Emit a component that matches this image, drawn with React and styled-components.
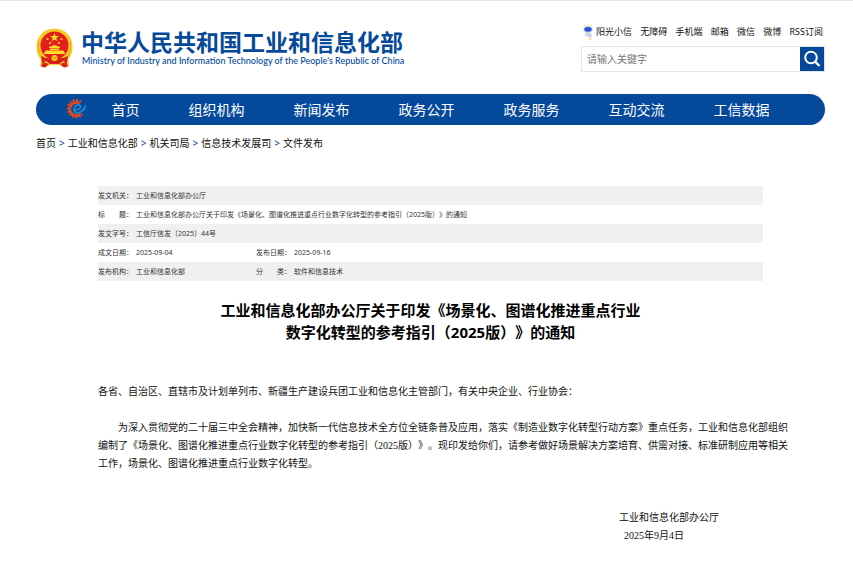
import React from 'react';
import styled, { createGlobalStyle, ThemeProvider } from 'styled-components';

const theme = {
  blue: '#05499a',
  stripe: '#f0f0f0',
  sans: '"Noto Sans", "Noto Sans CJK SC", sans-serif',
  song: '"Liberation Serif", "Noto Sans CJK SC", serif',
};

const GlobalStyle = createGlobalStyle`
  * {
    box-sizing: border-box;
  }
  body {
    margin: 0;
    color: #111;
    background: #fff;
    font-family: ${p => p.theme.sans};
    text-spacing-trim: space-all;
  }
  a {
    color: inherit;
    text-decoration: none;
  }
`;

const Page = styled.div`
  border-top: 1px solid #e8e8e8;
  padding: 0 28px 24px 36px;
`;

const Header = styled.header`
  display: flex;
  justify-content: space-between;
  padding-top: 22px;
  height: 93px;
`;

const Brand = styled.a`
  display: flex;
  gap: 8px;
  color: ${p => p.theme.blue};
  white-space: nowrap;
`;

const Emblem = styled.svg`
  width: 37px;
  height: 40px;
  margin-top: 5px;
`;

const BrandName = styled.h1`
  margin: 6px 0 0;
  font-size: 23px;
  line-height: 26px;
  font-weight: 700;
`;

const BrandSub = styled.p`
  margin: 0;
  padding-left: 1px;
  font-family: Lato, sans-serif;
  font-size: 9px;
  line-height: 12px;
  font-weight: 500;
`;

const Tools = styled.div`
  width: 244px;
`;

const QuickLinks = styled.nav`
  display: flex;
  justify-content: space-between;
  align-items: center;
  height: 18px;
  padding: 0 2px;
  font-size: 9px;
  line-height: 18px;
  white-space: nowrap;
`;

const Assistant = styled.a`
  display: flex;
  align-items: center;
  gap: 3px;
`;

const Search = styled.form`
  display: flex;
  height: 26px;
  margin-top: 5px;
  border: 1px solid #e6e6e6;
`;

const SearchInput = styled.input`
  flex: 1;
  min-width: 0;
  border: 0;
  padding: 0 5px;
  font-family: inherit;
  font-size: 10px;
  &::placeholder {
    color: #757575;
  }
`;

const SearchButton = styled.button`
  width: 24px;
  padding: 0;
  border: 0;
  display: flex;
  align-items: center;
  justify-content: center;
  background: ${p => p.theme.blue};
`;

const MainNav = styled.nav`
  display: flex;
  align-items: center;
  height: 31px;
  padding: 0 31px 2px;
  border-radius: 16px;
  color: #fff;
  background: ${p => p.theme.blue};
  font-size: 14px;
`;

const NavLink = styled.a`
  flex: ${p => (p.$short ? 77 : 105)};
  text-align: center;
  white-space: nowrap;
`;

const Crumbs = styled.nav`
  display: flex;
  gap: 3px;
  margin-top: 10px;
  font-size: 10px;
  line-height: 16px;
`;

const Divider = styled.span`
  color: ${p => p.theme.blue};
`;

const Article = styled.article`
  padding: 35px 62px 0;
`;

const Meta = styled.table`
  width: 100%;
  table-layout: fixed;
  border-collapse: collapse;
  color: #333;
  font-size: 7px;
  line-height: 19px;
  tr:nth-child(odd) {
    background: ${p => p.theme.stripe};
  }
  th,
  td {
    height: 19px;
    padding: 0;
    font-weight: 400;
    text-align: left;
    white-space: nowrap;
  }
`;

const Label = styled.span`
  display: flex;
  justify-content: space-between;
  width: 28px;
`;

const LabelCell = styled.div`
  display: flex;
`;

const Title = styled.h2`
  margin: 18px 0 0;
  color: #000;
  font-size: 15px;
  line-height: 22px;
  font-weight: 700;
  text-align: center;
`;

const Body = styled.div`
  margin: 40px -30px 0 0;
  font-family: ${p => p.theme.song};
  font-size: 10px;
  line-height: 18px;
`;

const Paragraph = styled.p`
  margin: 0 0 18px;
  text-indent: ${p => (p.$indent ? '2em' : 0)};
`;

const Signature = styled.div`
  width: 100px;
  margin: 36px 44px 0 auto;
  font-family: ${p => p.theme.song};
  font-size: 10px;
  line-height: 18px;
  white-space: nowrap;
`;

const SignDate = styled.div`
  padding-left: 5px;
`;

const quickLinks = ['无障碍', '手机端', '邮箱', '微信', '微博', 'RSS订阅'];

const sections = ['首页', '组织机构', '新闻发布', '政务公开', '政务服务', '互动交流', '工信数据'];

const crumbs = ['首页', '工业和信息化部', '机关司局', '信息技术发展司', '文件发布'];

const meta = [
  [['发文机关', '工业和信息化部办公厅']],
  [['标题', '工业和信息化部办公厅关于印发《场景化、图谱化推进重点行业数字化转型的参考指引（2025版）》的通知']],
  [['发文字号', '工信厅信发〔2025〕44号']],
  [['成文日期', '2025-09-04'], ['发布日期', '2025-09-16']],
  [['发布机构', '工业和信息化部'], ['分类', '软件和信息技术']],
];

function NationalEmblem() {
  return (
    <Emblem viewBox="0 0 37 40" aria-hidden="true">
      <path
        d="M18.500 0.500C7 0.500 0.500 9 0.500 19C0.500 25 2.500 29 5 31.500L4 38L9 39.500L14 37H23L28 39.500L33 38L32 31.500C34.500 29 36.500 25 36.500 19C36.500 9 30 0.500 18.500 0.500Z"
        fill="#f7cb2a"
      />
      <path d="M2.500 13Q1 25 8 31M34.500 13Q36 25 29 31" fill="none" stroke="#e5ab1c" />
      <circle cx="18.500" cy="17.500" r="14" fill="#e3201b" />
      <path
        d="M18.500 5L19.600 8.100H23L20.300 10.100L21.300 13.300L18.500 11.400L15.700 13.300L16.700 10.100L14 8.100H17.400Z"
        fill="#fbdc2c"
      />
      <g fill="#fbdc2c">
        <circle cx="11.500" cy="11" r="1.100" />
        <circle cx="25.500" cy="11" r="1.100" />
        <circle cx="14" cy="15" r="1.100" />
        <circle cx="23" cy="15" r="1.100" />
        <path d="M13 19L18.500 17L24 19V20H13ZM14 20.500H23V22H14ZM8 25L10 22.500H27L29 25V26H8Z" />
      </g>
      <path d="M5 28Q11 31 14 30L16 32H21L23 30Q26 31 32 28L31 35L27 33L23 36H14L10 33L6 35Z" fill="#d8201a" />
      <circle cx="18.500" cy="30" r="3" fill="#f5c71c" />
      <circle cx="18.500" cy="30" r="1" fill="#e39a1a" />
      <path d="M7 34L5 38.500L9 39.500L13 36ZM30 34L32 38.500L28 39.500L24 36Z" fill="#d8201a" />
    </Emblem>
  );
}

function Robot() {
  return (
    <svg width="10" height="16" viewBox="0 0 10 16" aria-hidden="true">
      <path d="M1 2.500L2 1M5 0V1.500M9 2.500L8 1" stroke="#f4d34a" />
      <ellipse cx="5" cy="5.500" rx="4.600" ry="3.600" fill="#bccdf2" />
      <ellipse cx="5" cy="5.300" rx="3.600" ry="2.400" fill="#2f50d8" />
      <path d="M2.500 8.500H8L9 13.500H6L4 12.500L1.500 11Z" fill="#cbd6e8" />
      <path d="M6 15H8" stroke="#f4d34a" strokeWidth="1.500" />
    </svg>
  );
}

function GearLogo() {
  return (
    <svg width="20" height="20" viewBox="0 0 20 20" fill="none" aria-hidden="true">
      <path
        d="M14 3A8.200 8.200 0 1 0 15.500 15"
        stroke="#e34a22"
        strokeWidth="2.800"
        strokeDasharray="1.900 1.400"
      />
      <path d="M12.500 4.500A6.400 6.400 0 1 0 13.500 15" stroke="#e34a22" strokeWidth="2.600" />
      <path d="M7 10.800Q12.500 11 13.500 8Q13.500 5.500 10.500 6Q6.500 7.500 7 11.500Q9 15.500 14 12.800Q18 10 18.800 6.500" stroke="#1e86cb" strokeWidth="1.800" />
    </svg>
  );
}

function SearchIcon() {
  return (
    <svg width="18" height="18" viewBox="0 0 18 18" fill="none" stroke="#fff" strokeWidth="2" aria-hidden="true">
      <circle cx="8" cy="7.500" r="5.800" />
      <path d="M12 11.500L16.500 16" strokeWidth="2.400" />
    </svg>
  );
}

function MetaLabel({ text }) {
  return (
    <LabelCell>
      <Label>
        {text.length === 2 ? [...text].map(c => <span key={c}>{c}</span>) : text}
      </Label>
      ：
    </LabelCell>
  );
}

function App() {
  return (
    <ThemeProvider theme={theme}>
      <GlobalStyle />
      <Page>
        <Header>
          <Brand href="#">
            <NationalEmblem />
            <div>
              <BrandName>中华人民共和国工业和信息化部</BrandName>
              <BrandSub>Ministry of Industry and Information Technology of the People's Republic of China</BrandSub>
            </div>
          </Brand>
          <Tools>
            <QuickLinks>
              <Assistant href="#">
                <Robot />
                阳光小信
              </Assistant>
              {quickLinks.map(text => (
                <a key={text} href="#">
                  {text}
                </a>
              ))}
            </QuickLinks>
            <Search>
              <SearchInput type="text" aria-label="搜索" placeholder="请输入关键字" />
              <SearchButton type="button" aria-label="搜索">
                <SearchIcon />
              </SearchButton>
            </Search>
          </Tools>
        </Header>
        <MainNav>
          <GearLogo />
          {sections.map((text, i) => (
            <NavLink key={text} href="#" $short={i === 0}>
              {text}
            </NavLink>
          ))}
        </MainNav>
        <Crumbs>
          {crumbs.map((text, i) => (
            <React.Fragment key={text}>
              {i > 0 && <Divider>&gt;</Divider>}
              <a href="#">{text}</a>
            </React.Fragment>
          ))}
        </Crumbs>
        <Article>
          <Meta>
            <colgroup>
              <col width="38" />
              <col width="120" />
              <col width="38" />
              <col />
            </colgroup>
            <tbody>
              {meta.map(row => (
                <tr key={row[0][0]}>
                  {row.map(([label, value]) => (
                    <React.Fragment key={label}>
                      <th scope="row">
                        <MetaLabel text={label} />
                      </th>
                      <td colSpan={row.length === 1 ? 3 : 1}>{value}</td>
                    </React.Fragment>
                  ))}
                </tr>
              ))}
            </tbody>
          </Meta>
          <Title>
            工业和信息化部办公厅关于印发《场景化、图谱化推进重点行业
            <br />
            数字化转型的参考指引（2025版）》的通知
          </Title>
          <Body>
            <Paragraph>
              各省、自治区、直辖市及计划单列市、新疆生产建设兵团工业和信息化主管部门，有关中央企业、行业协会：
            </Paragraph>
            <Paragraph $indent>
              为深入贯彻党的二十届三中全会精神，加快新一代信息技术全方位全链条普及应用，落实《制造业数字化转型行动方案》重点任务，工业和信息化部组织编制了《场景化、图谱化推进重点行业数字化转型的参考指引（2025版）》。现印发给你们，请参考做好场景解决方案培育、供需对接、标准研制应用等相关工作，场景化、图谱化推进重点行业数字化转型。
            </Paragraph>
          </Body>
          <Signature>
            <div>工业和信息化部办公厅</div>
            <SignDate>2025年9月4日</SignDate>
          </Signature>
        </Article>
      </Page>
    </ThemeProvider>
  );
}

export default App;
